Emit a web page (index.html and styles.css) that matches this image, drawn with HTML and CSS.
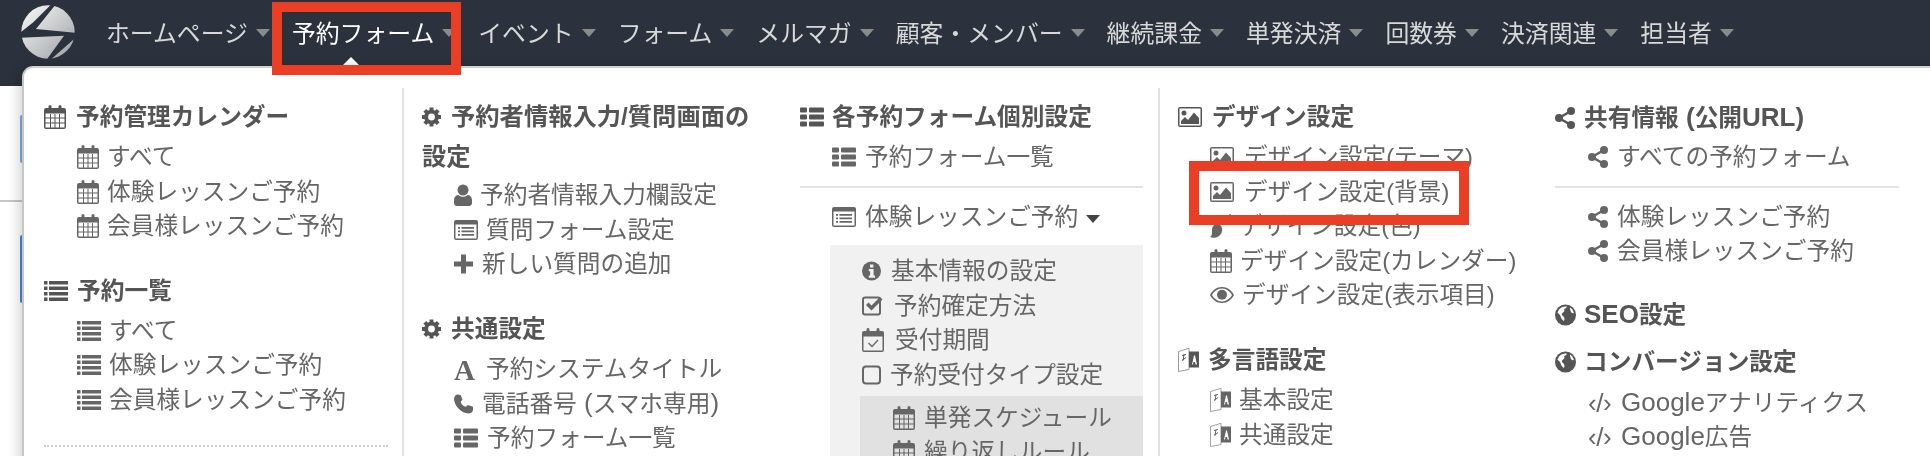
FILE: index.html
```html
<!DOCTYPE html>
<html lang="ja">
<head>
<meta charset="utf-8">
<title>予約フォーム</title>
<link rel="stylesheet" href="styles.css">
</head>
<body>
<svg class="defs" width="0" height="0" aria-hidden="true">
  <symbol id="i-cal" viewBox="0 0 22 24"><path fill-rule="evenodd" d="M2 3h2.500V1.500a1.500 1.500 0 013 0V3h7V1.500a1.500 1.500 0 013 0V3H20a2 2 0 012 2v17a2 2 0 01-2 2H2a2 2 0 01-2-2V5a2 2 0 012-2zM1.500 8.500v14h19v-14z"/><path d="M6 9h1v14H6zM10.500 9h1v14h-1zM15 9h1v14h-1zM1 12.500h20v1H1zM1 17.500h20v1H1z"/></symbol>
  <symbol id="i-list" viewBox="0 0 24 20"><path d="M0 0h3.500v3.500H0zM5 0h19v3.500H5zM0 5.400h3.500v3.600H0zM5 5.400h19v3.600H5zM0 11h3.500v3.600H0zM5 11h19v3.600H5zM0 16.400h3.500V20H0zM5 16.400h19V20H5z"/></symbol>
  <symbol id="i-th" viewBox="0 0 24 19"><rect width="7" height="5" rx="1"/><rect x="9" width="15" height="5" rx="1"/><rect y="7" width="7" height="5" rx="1"/><rect x="9" y="7" width="15" height="5" rx="1"/><rect y="14" width="7" height="5" rx="1"/><rect x="9" y="14" width="15" height="5" rx="1"/></symbol>
  <symbol id="i-gear" viewBox="0 0 24 24"><circle cx="12" cy="12" r="6.800" fill="none" stroke="currentColor" stroke-width="5"/><g><rect x="9.500" width="5" height="6"/><rect x="9.500" width="5" height="6" transform="rotate(45 12 12)"/><rect x="9.500" width="5" height="6" transform="rotate(90 12 12)"/><rect x="9.500" width="5" height="6" transform="rotate(135 12 12)"/><rect x="9.500" width="5" height="6" transform="rotate(180 12 12)"/><rect x="9.500" width="5" height="6" transform="rotate(225 12 12)"/><rect x="9.500" width="5" height="6" transform="rotate(270 12 12)"/><rect x="9.500" width="5" height="6" transform="rotate(315 12 12)"/></g></symbol>
  <symbol id="i-user" viewBox="0 0 18 22"><circle cx="9" cy="6" r="5.500"/><path d="M0 19v-3c0-3 2-5 4.500-5 1 1 2.800 1.800 4.500 1.800s3.500-.8 4.500-1.800c2.500 0 4.500 2 4.500 5v3c0 2-1.500 3-3 3H3c-1.500 0-3-1-3-3z"/></symbol>
  <symbol id="i-alt" viewBox="0 0 24 20"><path fill-rule="evenodd" d="M2 0h20a2 2 0 012 2v16a2 2 0 01-2 2H2a2 2 0 01-2-2V2a2 2 0 012-2zM1.500 4.500v14h21v-14z"/><path d="M4 7h2v1.800H4zM7.500 7H20v1.800H7.500zM4 10.500h2v1.800H4zM7.500 10.500H20v1.800H7.500zM4 14h2v1.800H4zM7.500 14H20v1.800H7.500z"/></symbol>
  <symbol id="i-plus" viewBox="0 0 19 19"><path d="M7 0h5v7h7v5h-7v7H7v-7H0V7h7z"/></symbol>
  <symbol id="i-phone" viewBox="0 0 20 20"><path d="M4 0l3 .5L9 5.500 7 7.500c1 3 2.500 4.500 5.500 5.500l2-2L20 13v3c0 2.500-2 4-5 4C7 19 1 13 0 5c0-3 2-5 4-5z"/></symbol>
  <symbol id="i-pic" viewBox="0 0 24 20"><path fill-rule="evenodd" d="M2 0h20a2 2 0 012 2v16a2 2 0 01-2 2H2a2 2 0 01-2-2V2a2 2 0 012-2zM1.500 1.500v17h21v-17z"/><circle cx="6" cy="6" r="2.500"/><path d="M3 17v-3l4-4 3 3 6-7.500 5 5.500v6z"/></symbol>
  <symbol id="i-brush" viewBox="0 0 21 24"><path d="M21 0c0 4-5 9-9 11l-2-2C12 5 17 1 21 0zM7 10c3 0 6 3 5 7-1 6-7 8-12 6 2-1 2-3 2-7 0-3 2-6 5-6z"/></symbol>
  <symbol id="i-eye" viewBox="0 0 24 16"><path fill-rule="evenodd" d="M12 0C6.500 0 2.500 3.500 0 8c2.500 4.500 6.500 8 12 8s9.500-3.500 12-8c-2.500-4.500-6.500-8-12-8zM12 1.500C7.500 1.500 4 4.500 2 8c2 3.500 5.500 6.500 10 6.500S20 11.500 22 8c-2-3.500-5.500-6.500-10-6.500z"/><circle cx="12" cy="7.800" r="5"/></symbol>
  <symbol id="i-lang" viewBox="0 0 21 25"><path d="M.5 4L11 .8V22L.5 24z" fill="none" stroke="currentColor" opacity=".6"/><path d="M4 8l4-1M6 7l-1 6M4 13l4-3" fill="none" stroke="currentColor"/><path d="M11 4h10v16H11z"/><path d="M14 17l2-9h1l2 9h-1.500l-.5-2.500h-1.500l-.5 2.500z" fill="#fff"/></symbol>
  <symbol id="i-share" viewBox="0 0 20 22"><circle cx="16" cy="4" r="4"/><circle cx="4" cy="11" r="4"/><circle cx="16" cy="18" r="4"/><path d="M16 4L4 11l12 7" fill="none" stroke="currentColor" stroke-width="2.500"/></symbol>
  <symbol id="i-globe" viewBox="0 0 21 21"><circle cx="10.500" cy="10.500" r="10.500"/><path fill="#fff" d="M4 5c2-2.500 5-3.500 8-3-.5 1.500-2 2-3 3 1 1 0 2.500-1 3-1 1-2 2 0 3.500 1.500 1 2 3 1 5-2-1-3-3-3.500-5C5 10 3 9 2.500 8 3 7 3.500 6 4 5zM15 3c2 1 3.500 3 3.800 5.500-1 .5-2.500 0-3-1.500-.5-1.500-1-3-.8-4z"/></symbol>
  <symbol id="i-info" viewBox="0 0 19 19"><circle cx="9.500" cy="9.500" r="9.500"/><path fill="#f1f1f1" d="M8 3h3.400v3H8zM6.800 7.500h4.800V14h1.400v2.200H6.800V14h1.300V9.700H6.800z"/></symbol>
  <symbol id="i-check" viewBox="0 0 21 21"><path fill-rule="evenodd" d="M3 1h13a3 3 0 013 3v13a3 3 0 01-3 3H3a3 3 0 01-3-3V4a3 3 0 013-3zM3 3a1 1 0 00-1 1v13a1 1 0 001 1h13a1 1 0 001-1V4a1 1 0 00-1-1z"/><path d="M4 9.500l2.500-2.500 3 3L18 1.500 20.500 4 9.500 15z"/></symbol>
  <symbol id="i-calc" viewBox="0 0 22 24"><path fill-rule="evenodd" d="M2 3h2.500V1.500a1.500 1.500 0 013 0V3h7V1.500a1.500 1.500 0 013 0V3H20a2 2 0 012 2v17a2 2 0 01-2 2H2a2 2 0 01-2-2V5a2 2 0 012-2zM1.500 8.500v14h19v-14z"/><path d="M6 15.500l1-1 3 3 5.500-6 1 1L10 19.500z"/></symbol>
  <symbol id="i-square" viewBox="0 0 19 19"><path fill-rule="evenodd" d="M4 0h11a4 4 0 014 4v11a4 4 0 01-4 4H4a4 4 0 01-4-4V4a4 4 0 014-4zM4 2a2 2 0 00-2 2v11a2 2 0 002 2h11a2 2 0 002-2V4a2 2 0 00-2-2z"/></symbol>
  <linearGradient id="logo-g" x1="0" y1="0" x2="1" y2="1"><stop offset="0" stop-color="#fafafa"/><stop offset="1" stop-color="#9c9ea2"/></linearGradient>
</svg>

<div class="frame">
  <header class="nav">
    <svg class="logo" viewBox="0 0 160 162">
      <circle cx="80" cy="81" r="80" fill="url(#logo-g)"/>
      <path class="logo-cut" d="M90-2L100 2 44 72 165 84V96L88 164H76L128 92-2 98V82L36 52z"/>
    </svg>
    <a class="nav-item">ホームページ<i class="caret"></i></a>
    <a class="nav-item is-active">予約フォーム<i class="caret"></i></a>
    <a class="nav-item">イベント<i class="caret"></i></a>
    <a class="nav-item">フォーム<i class="caret"></i></a>
    <a class="nav-item">メルマガ<i class="caret"></i></a>
    <a class="nav-item">顧客・メンバー<i class="caret"></i></a>
    <a class="nav-item">継続課金<i class="caret"></i></a>
    <a class="nav-item">単発決済<i class="caret"></i></a>
    <a class="nav-item">回数券<i class="caret"></i></a>
    <a class="nav-item">決済関連<i class="caret"></i></a>
    <a class="nav-item">担当者<i class="caret"></i></a>
  </header>

  <div class="behind">
    <div class="behind-a"><span class="tab tab-light"></span></div>
    <div class="behind-b"><span class="tab"></span></div>
  </div>

  <section class="menu">
    <div class="col col-1">
      <div class="head"><svg class="ic w22"><use href="#i-cal"/></svg>予約管理カレンダー</div>
      <div class="row in33"><svg class="ic w22 m8"><use href="#i-cal"/></svg>すべて</div>
      <div class="row in33"><svg class="ic w22 m8"><use href="#i-cal"/></svg>体験レッスンご予約</div>
      <div class="row in33"><svg class="ic w22 m8"><use href="#i-cal"/></svg>会員様レッスンご予約</div>
      <div class="head gap"><svg class="ic w24 m9"><use href="#i-list"/></svg>予約一覧</div>
      <div class="row in33"><svg class="ic w24 m8"><use href="#i-list"/></svg>すべて</div>
      <div class="row in33"><svg class="ic w24 m8"><use href="#i-list"/></svg>体験レッスンご予約</div>
      <div class="row in33"><svg class="ic w24 m8"><use href="#i-list"/></svg>会員様レッスンご予約</div>
      <div class="dots"></div>
    </div>

    <div class="col col-2">
      <div class="head head-wrap"><svg class="ic w19"><use href="#i-gear"/></svg>予約者情報入力/質問画面の設定</div>
      <div class="row in32"><svg class="ic w18 m8"><use href="#i-user"/></svg>予約者情報入力欄設定</div>
      <div class="row in32"><svg class="ic w24 m8"><use href="#i-alt"/></svg>質問フォーム設定</div>
      <div class="row in32"><svg class="ic w19 m9"><use href="#i-plus"/></svg>新しい質問の追加</div>
      <div class="head gap"><svg class="ic w19"><use href="#i-gear"/></svg>共通設定</div>
      <div class="row in32"><span class="glyph font">A</span>予約システムタイトル</div>
      <div class="row in32"><svg class="ic w19 m9"><use href="#i-phone"/></svg>電話番号<span class="lat"> (</span>スマホ専用<span class="lat">)</span></div>
      <div class="row in32"><svg class="ic w24 m9"><use href="#i-th"/></svg>予約フォーム一覧</div>
    </div>

    <div class="col col-3">
      <div class="head"><svg class="ic w24 m8"><use href="#i-th"/></svg>各予約フォーム個別設定</div>
      <div class="row in32"><svg class="ic w24 m9"><use href="#i-th"/></svg>予約フォーム一覧</div>
      <hr class="rule">
      <div class="row in32 sub"><svg class="ic w24 m9"><use href="#i-alt"/></svg>体験レッスンご予約<i class="caret caret-dark"></i></div>
      <div class="panel">
        <div class="row"><svg class="ic w19"><use href="#i-info"/></svg>基本情報の設定</div>
        <div class="row"><svg class="ic w21 m11"><use href="#i-check"/></svg>予約確定方法</div>
        <div class="row"><svg class="ic w22 m11"><use href="#i-calc"/></svg>受付期間</div>
        <div class="row"><svg class="ic w19 m9"><use href="#i-square"/></svg>予約受付タイプ設定</div>
        <div class="subpanel">
          <div class="row"><svg class="ic w22 m9"><use href="#i-cal"/></svg>単発スケジュール</div>
          <div class="row"><svg class="ic w22 m9"><use href="#i-cal"/></svg>繰り返しルール</div>
        </div>
      </div>
    </div>

    <div class="col col-4">
      <div class="head"><svg class="ic w24"><use href="#i-pic"/></svg>デザイン設定</div>
      <div class="row in32"><svg class="ic w24"><use href="#i-pic"/></svg>デザイン設定(テーマ)</div>
      <div class="row in32"><svg class="ic w24"><use href="#i-pic"/></svg>デザイン設定(背景)</div>
      <div class="row in32"><svg class="ic w21 m8"><use href="#i-brush"/></svg>デザイン設定(色)</div>
      <div class="row in32"><svg class="ic w22 m8"><use href="#i-cal"/></svg>デザイン設定(カレンダー)</div>
      <div class="row in32"><svg class="ic w24 m8"><use href="#i-eye"/></svg>デザイン設定(表示項目)</div>
      <div class="head gap"><svg class="ic w21 tall m9"><use href="#i-lang"/></svg>多言語設定</div>
      <div class="row in32"><svg class="ic w21 tall m8"><use href="#i-lang"/></svg>基本設定</div>
      <div class="row in32"><svg class="ic w21 tall m8"><use href="#i-lang"/></svg>共通設定</div>
    </div>

    <div class="col col-5">
      <div class="head"><svg class="ic w20 m9"><use href="#i-share"/></svg>共有情報<span class="lat"> (</span>公開<span class="lat">URL)</span></div>
      <div class="row in33"><svg class="ic w20 m9"><use href="#i-share"/></svg>すべての予約フォーム</div>
      <hr class="rule">
      <div class="row in33 sub"><svg class="ic w20 m9"><use href="#i-share"/></svg>体験レッスンご予約</div>
      <div class="row in33"><svg class="ic w20 m9"><use href="#i-share"/></svg>会員様レッスンご予約</div>
      <div class="head gap-seo"><svg class="ic w21 m8"><use href="#i-globe"/></svg><span class="lat">SEO</span>設定</div>
      <div class="head gap-conv"><svg class="ic w21 m8"><use href="#i-globe"/></svg>コンバージョン設定</div>
      <div class="row in33"><span class="glyph code">&lsaquo;/&rsaquo;</span><span class="lat">Google</span>アナリティクス</div>
      <div class="row in33"><span class="glyph code">&lsaquo;/&rsaquo;</span><span class="lat">Google</span>広告</div>
    </div>
  </section>

  <div class="mark mark-nav"></div>
  <div class="mark mark-item"></div>
</div>
</body>
</html>
```
FILE: styles.css
```css
* { box-sizing: border-box; }
html, body { margin: 0; padding: 0; background: #fff; }
.defs { position: absolute; }

.frame {
  position: relative;
  width: 1930px;
  height: 456px;
  overflow: hidden;
  background: #fff;
  font-family: "Liberation Sans", "Noto Sans CJK JP", sans-serif;
  font-size: 23.7px;
  color: #666;
  filter: blur(.45px);
}

/* top bar */
.nav {
  display: flex;
  align-items: flex-start;
  height: 86px;
  padding: 5px 0 0 21px;
  background: #2b323d;
  color: #d8d8d8;
}
.logo { width: 54px; height: 54px; margin-right: 31px; flex: none; }
.logo-cut { fill: #2b323d; }
.nav-item {
  position: relative;
  display: flex;
  align-items: center;
  height: 52px;
  margin-right: 22px;
  font-size: 23.85px;
  white-space: nowrap;
}
.nav-item.is-active { color: #fff; }
.nav-item.is-active::after {
  content: "";
  position: absolute;
  left: 51px;
  top: 52px;
  border: 8px solid transparent;
  border-top: 0;
  border-bottom-color: #fff;
}
.caret {
  width: 0;
  height: 0;
  margin-left: 8px;
  margin-top: 3px;
  border: 7.500px solid transparent;
  border-bottom: 0;
  border-top: 8px solid #8b8b8b;
}
.caret-dark { display: inline-block; vertical-align: 2px; border-top-color: #444; margin-top: 0; }

/* page under the menu */
.behind { width: 22px; }
.behind-a {
  display: flex;
  justify-content: flex-end;
  height: 116px;
  padding-top: 29px;
  border-bottom: 2px solid #c6c6c6;
}
.behind-b {
  display: flex;
  justify-content: flex-end;
  padding-top: 33px;
}
.tab { width: 2px; height: 48px; background: #7da8de; border-radius: 2px 0 0 2px; }
.behind-b .tab { height: 68px; background: #4684d8; }

/* mega menu */
.menu {
  position: absolute;
  left: 22px;
  top: 66px;
  width: 1930px;
  height: 420px;
  display: flex;
  align-items: stretch;
  padding-top: 20px;
  background: #fff;
  border-top: 2px solid #d0d0d0;
  border-left: 2px solid #c6c6c6;
  border-top-left-radius: 11px;
  box-shadow: -4px 0 12px rgba(0, 0, 0, .16);
}
.col { flex: none; padding-top: 12px; }
.col-1 { width: 380px; padding-left: 20px; padding-right: 14px; border-right: 2px solid #e2e2e2; }
.col-2 { width: 378px; padding-left: 18px; padding-right: 20px; }
.col-3 { width: 378px; padding-left: 18px; padding-right: 15px; border-right: 2px solid #e2e2e2; }
.col-4 { width: 377px; padding-left: 18px; }
.col-5 { width: 362px; padding-left: 18px; }

.head, .row { height: 34.600px; line-height: 34.600px; white-space: nowrap; }
.head { height: 34px; line-height: 34px; margin-bottom: 6px; font-weight: 700; color: #555; }
.head-wrap { height: 81px; line-height: 40px; margin: -3px 0 0; font-size: 24.3px; white-space: normal; }
.gap { margin-top: 30px; }
.gap-seo { margin-top: 28px; }
.gap-conv { margin-top: 14px; }
.in33 { padding-left: 33px; }
.in32 { padding-left: 32px; }
.lat { font-size: 26px; white-space: pre; }

.ic { display: inline-block; height: 24px; margin-right: 10px; vertical-align: -4px; fill: currentColor; }
.w18 { width: 18px; }
.w19 { width: 19px; }
.w20 { width: 20px; }
.w21 { width: 21px; }
.w22 { width: 22px; }
.w24 { width: 24px; }
.tall { height: 26px; vertical-align: -5px; }
.m8 { margin-right: 8px; }
.m9 { margin-right: 9px; }
.m11 { margin-right: 11px; }

.glyph { display: inline-block; white-space: nowrap; }
.font { width: 22px; margin-right: 10px; font-family: "Liberation Serif", serif; font-size: 29px; font-weight: 700; line-height: 1; vertical-align: -3px; }
.code { width: 23px; margin-right: 10px; font-size: 26px; letter-spacing: -.5px; line-height: 1; vertical-align: -1px; }

.dots { margin-top: 27px; border-top: 2px dotted #cfcfcf; }
.rule { height: 2px; margin: 11px 0 0; border: 0; background: #e3e3e3; }
.sub { margin-top: 12px; }

.panel { margin-top: 11px; margin-left: 30px; padding: 9px 0 40px 32px; background: #f1f1f1; }
.subpanel { margin: 3px 0 0 -2px; padding: 5px 0 40px 33px; background: #e1e1e1; }

/* red annotation frames */
.mark { position: absolute; border: 10px solid #ea3f24; }
.mark-nav { left: 272px; top: 2px; width: 189px; height: 73px; }
.mark-item { left: 1189px; top: 161px; width: 280px; height: 64px; }
```
